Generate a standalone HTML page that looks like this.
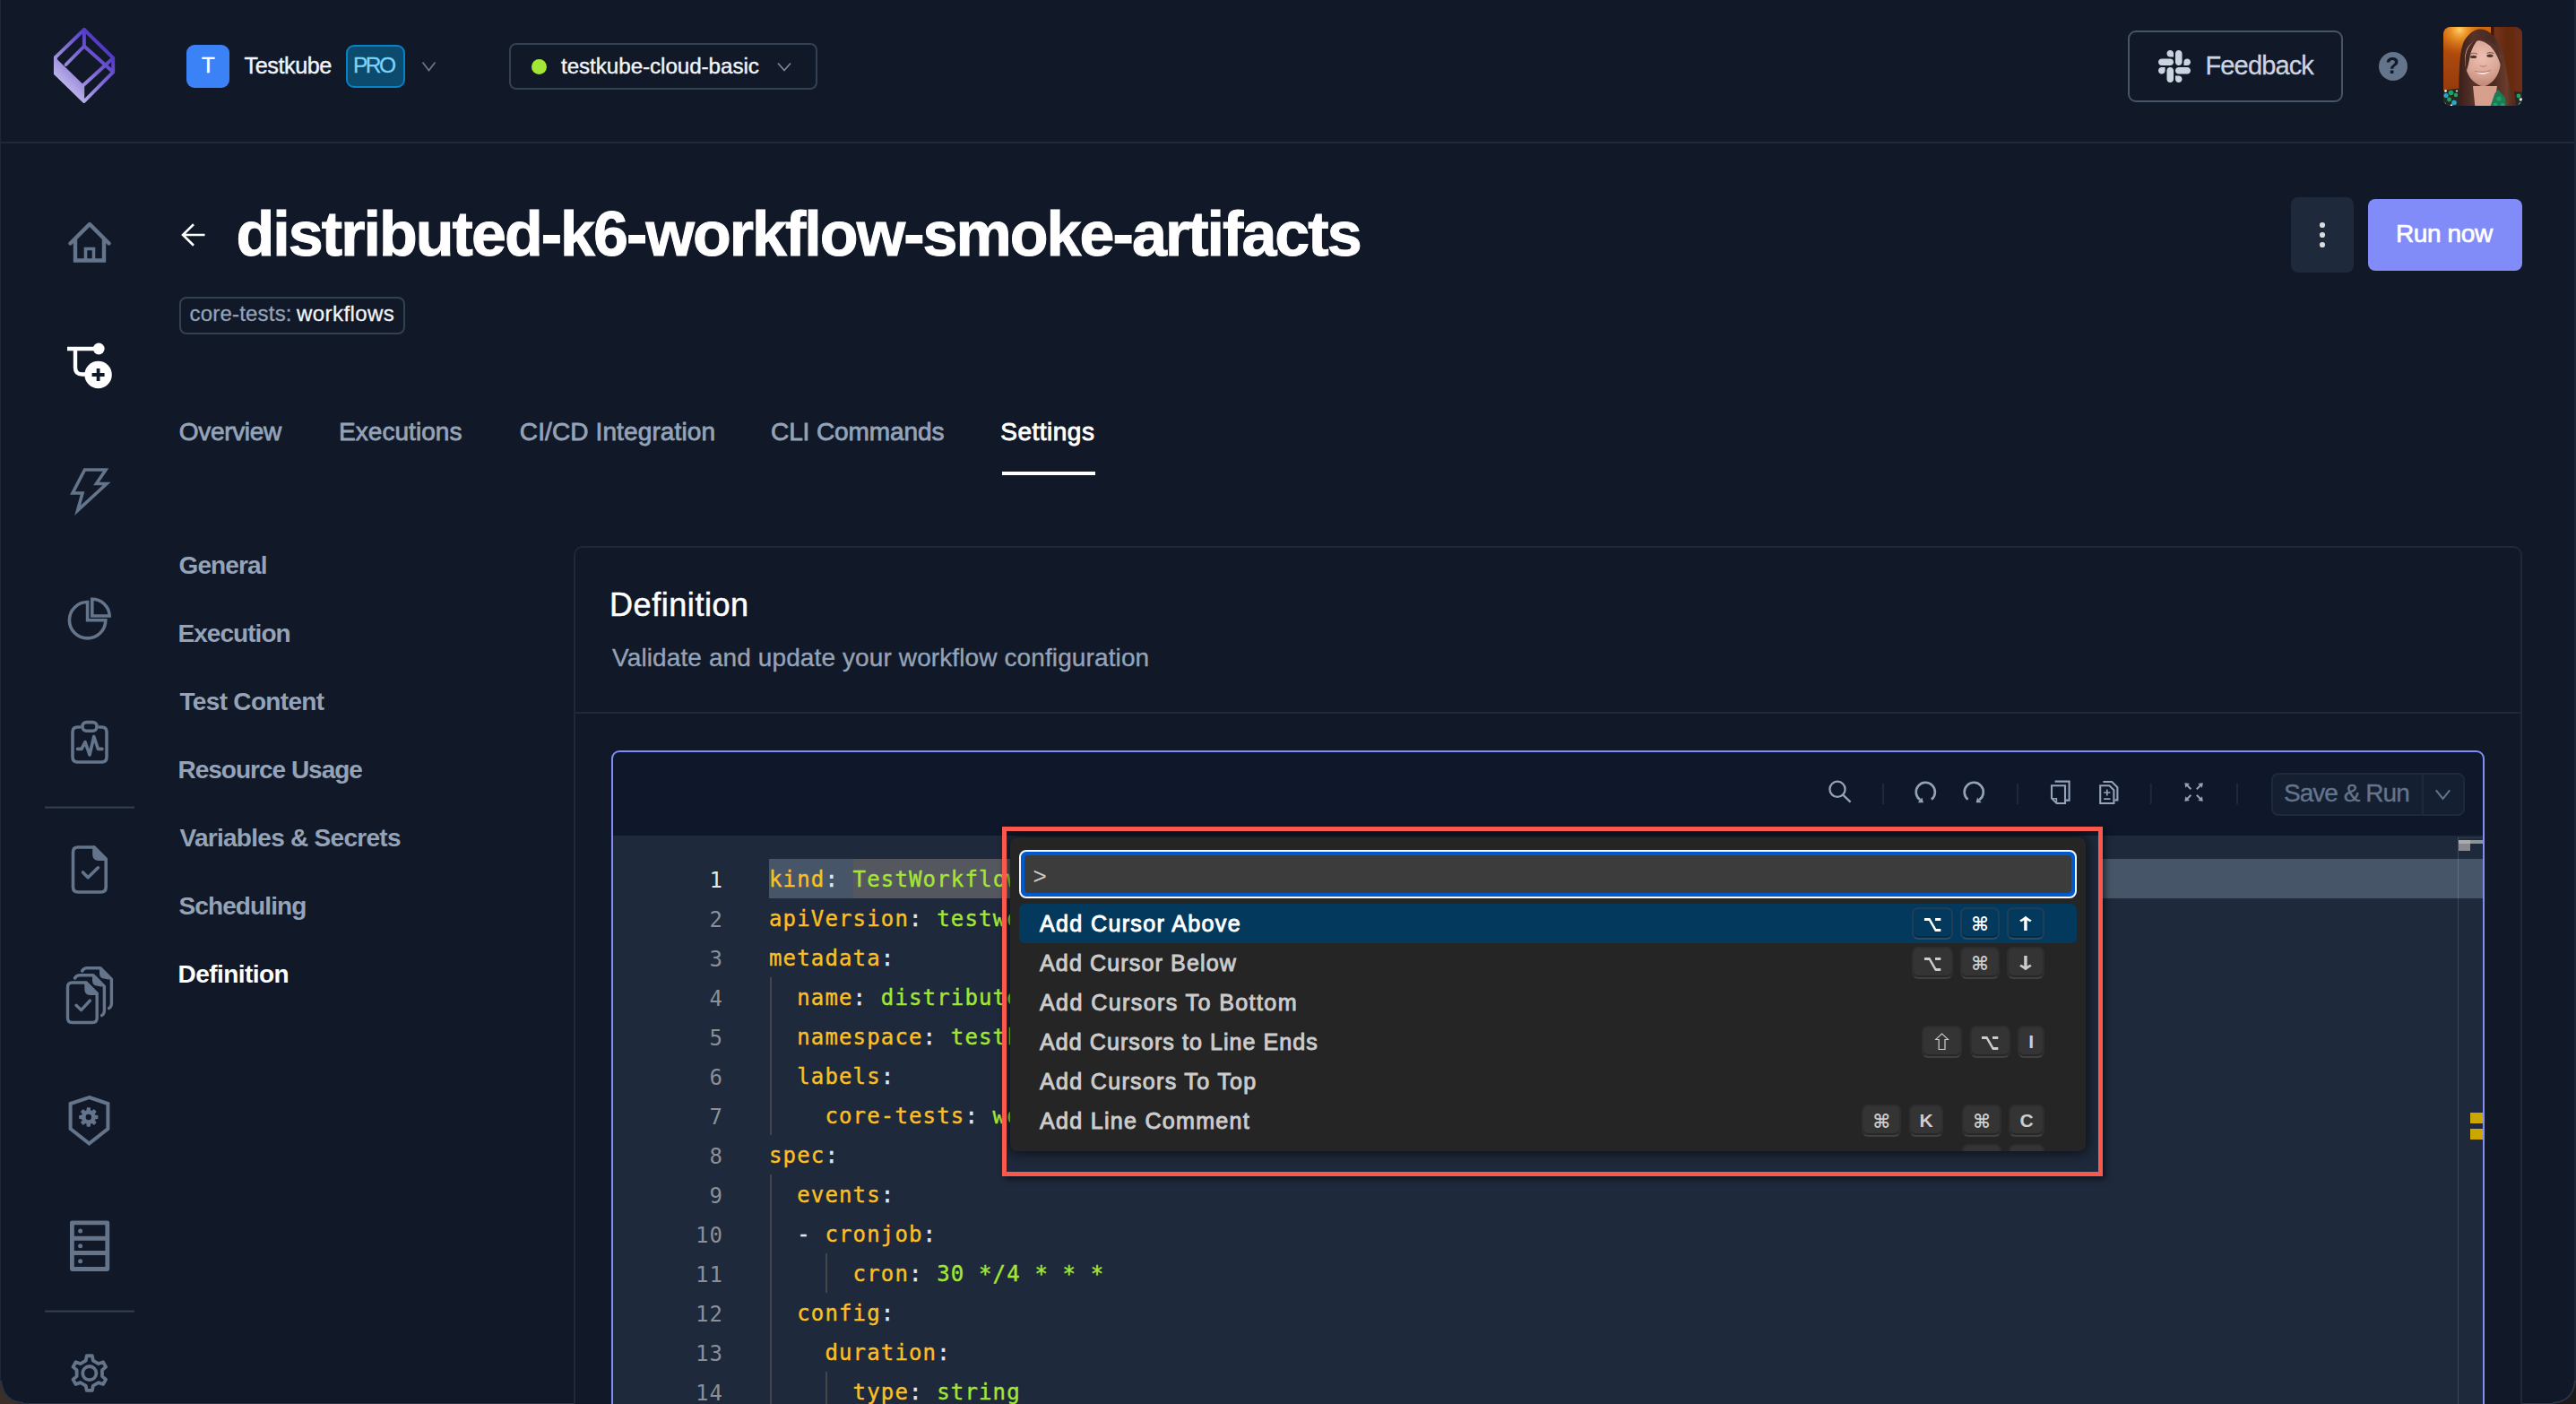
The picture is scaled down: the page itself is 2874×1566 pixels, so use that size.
<!DOCTYPE html>
<html lang="en">
<head>
<meta charset="utf-8">
<title>distributed-k6-workflow-smoke-artifacts - Testkube</title>
<style>
html,body{margin:0;padding:0;background:#111827;}
body{width:2874px;height:1566px;overflow:hidden;position:relative;font-family:'Liberation Sans',sans-serif;}
.t{position:absolute;white-space:pre;line-height:1;}
#app{position:absolute;left:0;top:0;width:2874px;height:1566px;overflow:hidden;background:#111827;}
</style>
</head>
<body>
<div id="app">
<!-- header -->
<div style="position:absolute;left:0px;top:158px;width:2874px;height:2px;background:#1e293b;"></div>
<svg style="position:absolute;left:56px;top:28px;" width="76" height="90" viewBox="56 28 76 90" fill="none">
<defs><linearGradient id="lg" x1="60" y1="100" x2="114" y2="48" gradientUnits="userSpaceOnUse">
<stop offset="0" stop-color="#d2cff0"/><stop offset="0.5" stop-color="#8b78d8"/><stop offset="1" stop-color="#4f34c8"/></linearGradient></defs>
<g stroke="url(#lg)" stroke-width="3.9" stroke-linejoin="round" stroke-linecap="round">
<path d="M93.9 33 L126.2 64.7 L126.2 80.3 L93.9 113 L61.9 81.9 L61.9 63.9 Z"/>
<path d="M93.9 33 V51.5 M93.9 51.5 L73.6 72 M93.9 51.5 L126.2 80.3 M93 95 L126.2 64.7"/>
<path d="M60 62.4 L94.2 95.4 L94.2 114.6 L60 82.6 Z" fill="url(#lg)" stroke="none"/>
</g></svg>
<div style="position:absolute;left:208px;top:50px;width:48px;height:48px;background:#3b82f6;border-radius:9px;"></div>
<span class="t" style="left:225.0px;top:61.2px;font-size:24px;color:#ffffff;letter-spacing:-0.50px;-webkit-text-stroke:0.5px #ffffff;">T</span>
<span class="t" style="left:272.5px;top:60.7px;font-size:25.2px;color:#f1f5f9;letter-spacing:-0.43px;-webkit-text-stroke:0.4px #f1f5f9;">Testkube</span>
<div style="position:absolute;left:386px;top:50px;width:66px;height:48px;box-sizing:border-box;background:#0c4a6e;border:2px solid #0284c7;border-radius:9px;"></div>
<span class="t" style="left:394.0px;top:61.3px;font-size:24.5px;color:#7dd3fc;letter-spacing:-2.50px;-webkit-text-stroke:0.3px #7dd3fc;">PRO</span>
<svg style="position:absolute;left:468px;top:66px;" width="22" height="16" viewBox="468 66 22 16" fill="none"><path d="M471.5 69.5 L478.5 78.5 L485.5 69.5" stroke="#6b7789" stroke-width="1.7" /></svg>
<div style="position:absolute;left:568px;top:48px;width:344px;height:52px;box-sizing:border-box;border:2px solid #334155;border-radius:8px;"></div>
<div style="position:absolute;left:593px;top:66px;width:17px;height:17px;background:#a3e635;border-radius:50%;"></div>
<span class="t" style="left:626.0px;top:61.8px;font-size:24.2px;color:#f1f5f9;letter-spacing:-0.05px;-webkit-text-stroke:0.4px #f1f5f9;">testkube-cloud-basic</span>
<svg style="position:absolute;left:864px;top:66px;" width="22" height="16" viewBox="864 66 22 16" fill="none"><path d="M868 70.5 L875 78.5 L882 70.5" stroke="#7b899d" stroke-width="1.7" /></svg>
<div style="position:absolute;left:2374px;top:34px;width:240px;height:80px;box-sizing:border-box;border:2px solid #475569;border-radius:9px;"></div>
<svg style="position:absolute;left:2404px;top:52px;" width="44" height="44" viewBox="2404 52 44 44" fill="none"><g fill="#cbd5e1" transform="translate(2408 56) scale(0.2932)">
<path d="M25.8 77.6c0 7.1-5.8 12.9-12.9 12.9S0 84.7 0 77.6s5.8-12.9 12.9-12.9h12.9v12.9zm6.5 0c0-7.1 5.8-12.9 12.9-12.9s12.9 5.8 12.9 12.9v32.3c0 7.1-5.8 12.9-12.9 12.9s-12.9-5.8-12.9-12.9V77.6z"/>
<path d="M45.2 25.8c-7.1 0-12.9-5.8-12.9-12.9S38.1 0 45.2 0s12.9 5.8 12.9 12.9v12.9H45.2zm0 6.5c7.1 0 12.9 5.8 12.9 12.9s-5.8 12.9-12.9 12.9H12.9C5.8 58.1 0 52.3 0 45.2s5.8-12.9 12.9-12.9h32.3z"/>
<path d="M97 45.2c0-7.1 5.8-12.9 12.9-12.9s12.9 5.8 12.9 12.9-5.8 12.9-12.9 12.9H97V45.2zm-6.5 0c0 7.1-5.8 12.9-12.9 12.9s-12.9-5.8-12.9-12.9V12.9C64.7 5.8 70.5 0 77.6 0s12.9 5.8 12.9 12.9v32.3z"/>
<path d="M77.6 97c7.1 0 12.9 5.8 12.9 12.9s-5.8 12.9-12.9 12.9-12.9-5.8-12.9-12.9V97h12.9zm0-6.5c-7.1 0-12.9-5.8-12.9-12.9s5.8-12.9 12.9-12.9h32.3c7.1 0 12.9 5.8 12.9 12.9s-5.8 12.9-12.9 12.9H77.6z"/>
</g></svg>
<span class="t" style="left:2460.5px;top:58.5px;font-size:29px;color:#cbd5e1;letter-spacing:-0.86px;-webkit-text-stroke:0.3px #cbd5e1;">Feedback</span>
<div style="position:absolute;left:2654px;top:58px;width:32px;height:32px;background:#64748b;border-radius:50%;"></div>
<span class="t" style="left:2661.5px;top:61.3px;font-size:25px;color:#111827;font-weight:bold;">?</span>
<svg style="position:absolute;left:2726px;top:30px;" width="88" height="88" viewBox="0 0 88 88" fill="none">
<defs>
<clipPath id="avc"><rect x="0" y="0" width="88" height="88" rx="8" ry="8"/></clipPath>
<filter id="avb" x="-5%" y="-5%" width="110%" height="110%"><feGaussianBlur stdDeviation="0.75"/></filter>
<filter id="avb2" x="-5%" y="-5%" width="110%" height="110%"><feGaussianBlur stdDeviation="0.4"/></filter>
<linearGradient id="avbg" x1="0" y1="0" x2="0" y2="88" gradientUnits="userSpaceOnUse"><stop offset="0" stop-color="#d2690f"/><stop offset="0.3" stop-color="#b04a0c"/><stop offset="1" stop-color="#8a3609"/></linearGradient>
<radialGradient id="avhl" cx="18" cy="3" r="30" gradientUnits="userSpaceOnUse"><stop offset="0" stop-color="#ffd070"/><stop offset="0.3" stop-color="#f09a2c" stop-opacity="0.9"/><stop offset="1" stop-color="#c8640f" stop-opacity="0"/></radialGradient>
<linearGradient id="avr" x1="56" y1="0" x2="88" y2="0" gradientUnits="userSpaceOnUse"><stop offset="0" stop-color="#74341a"/><stop offset="0.5" stop-color="#64290f"/><stop offset="1" stop-color="#6e3016"/></linearGradient>
<linearGradient id="avhair" x1="17" y1="0" x2="80" y2="0" gradientUnits="userSpaceOnUse"><stop offset="0" stop-color="#3b2019"/><stop offset="0.25" stop-color="#55322a"/><stop offset="0.6" stop-color="#4a2a22"/><stop offset="0.85" stop-color="#6a3c2c"/><stop offset="1" stop-color="#4a271c"/></linearGradient>
<radialGradient id="avface" cx="44" cy="34" r="30" gradientUnits="userSpaceOnUse"><stop offset="0" stop-color="#eec0b2"/><stop offset="0.6" stop-color="#dba797"/><stop offset="1" stop-color="#c48d7b"/></radialGradient>
</defs>
<g clip-path="url(#avc)">
<g filter="url(#avb)">
<rect x="-2" y="-2" width="92" height="92" fill="url(#avbg)"/>
<rect x="-2" y="-2" width="60" height="34" fill="url(#avhl)"/>
<rect x="56" y="-2" width="34" height="92" fill="url(#avr)"/>
<rect x="53" y="-2" width="3.5" height="30" fill="#3e180a"/>
<path d="M41 2.5 C34 2.5 28 8 23 16 C19.5 24 18.5 36 18 45 C17.2 56 16.8 70 18.5 90 L80.5 90 C79 82 75 70 72.6 60 C71 50 68.5 38 66 29 C63 19 58 10 50.6 5.5 C47.5 3.5 44.5 2.5 41 2.5 Z" fill="url(#avhair)"/>
<path d="M33 66 L60 66 L56.5 90 L35.5 90 Z" fill="#d7a08d"/>
<path d="M24 36 C24 24 30 15 42 15 C55 15 64 24 64 37 C64 50 58 60 50 64.5 C46 66.5 42.5 66.5 39 64.5 C30 60 24 50 24 36 Z" fill="url(#avface)"/>
<path d="M24.5 40 C24 26 30 17 38 14.5 C34 20 30.5 27 29.5 34 C28.5 40 27 46 25.5 50 Z" fill="#4a2a22"/>
<path d="M38 14.5 C46 12.5 56 16 61 24 C63.5 29 64.5 36 64.5 44 C62 36 58 27 52 21 C48 17.5 43 15.5 38 14.5 Z" fill="#53302a"/>
<ellipse cx="33.6" cy="33.4" rx="3.6" ry="1.7" fill="#4e352e"/>
<ellipse cx="52" cy="32.2" rx="3.6" ry="1.7" fill="#4e352e"/>
<path d="M30 30.6 C32.5 29 35.5 29 38 30.4 M48.5 29.6 C51 28.2 54 28.4 56.5 29.8" stroke="#8a6256" stroke-width="1.1" fill="none"/>
<path d="M40.5 43 C43 44.6 46 44.6 48.5 43" stroke="#bf8876" stroke-width="1.3" fill="none"/>
<path d="M35.5 49.6 C40 51.4 48 51.4 52.5 48.8 C48.5 54 40 54.2 35.5 49.6 Z" fill="#f6eeea"/>
<path d="M35 49.4 C40 51 48 50.8 53 48.4" stroke="#b06a5e" stroke-width="0.9" fill="none"/>
</g>
<g filter="url(#avb2)">
<path d="M-2 71 L17.5 68.5 L19 90 L-2 90 Z" fill="#2a2622"/>
<path d="M57.5 74 L61 70 L69 79 L70 90 L52 90 Z" fill="#1f7a56"/>
<path d="M79 72 L90 73 L90 90 L81 90 Z" fill="#2a2622"/>
<g fill="#2aa6c4"><circle cx="3" cy="76.5" r="2.6"/><circle cx="12" cy="84.5" r="2.8"/><circle cx="1" cy="86" r="2"/><circle cx="86" cy="86.5" r="2.2"/></g>
<g fill="#1fa467"><circle cx="8.5" cy="73.5" r="2.8"/><circle cx="6.5" cy="81" r="2.4"/><circle cx="14" cy="76" r="2.2"/><circle cx="62" cy="80" r="2.6"/><circle cx="58" cy="87" r="2.4"/><circle cx="66" cy="87" r="2.2"/><circle cx="84" cy="77" r="2.4"/></g>
<g fill="#ece6dc"><circle cx="2.5" cy="71.5" r="1.4"/><circle cx="86.5" cy="81" r="1.8"/><circle cx="15" cy="71.5" r="1.1"/><circle cx="9" cy="87.5" r="1.2"/></g>
</g>
</g></svg>
<div style="position:absolute;left:2872px;top:0px;width:2px;height:1566px;background:#1c2536;"></div>
<div style="position:absolute;left:0px;top:0px;width:1px;height:1566px;background:#1f2839;"></div>
<!-- sidebar -->
<svg style="position:absolute;left:40px;top:230px;" width="120" height="1336" viewBox="40 230 120 1336" fill="none"><g stroke="#64748b" stroke-width="4.4" stroke-linejoin="round" stroke-linecap="round"><path d="M78.5 271.5 L100 250 L121.5 271.5"/><path d="M84 267 V290.5 H116 V267" stroke-linejoin="miter" stroke-linecap="butt"/><path d="M95.5 290 V277.5 H104.5 V290" stroke-width="3.6" stroke-linejoin="miter" stroke-linecap="butt"/></g><g stroke="#ffffff" stroke-width="4.4" fill="none"><path d="M75 389 H108"/><path d="M84 389 V410 Q84 417.5 91.5 417.5 H100"/></g><circle cx="110.2" cy="389" r="6.4" fill="#fff"/><circle cx="109.6" cy="418" r="15.2" fill="#fff"/><path d="M102.6 418 H116.6 M109.6 411 V425" stroke="#111827" stroke-width="3.8"/><path d="M94.5 524 H118 L107.5 539.5 H119 L86.6 569.4 L92 550 H81 Z" stroke="#64748b" stroke-width="3.6" stroke-linejoin="miter"/><g stroke="#64748b" stroke-width="3.6" fill="none"><path d="M97.6 671.5 A20.2 20.2 0 1 0 117.8 691.7 H97.6 Z" stroke-linejoin="miter"/><path d="M102.8 668.2 A19.4 19.4 0 0 1 122.2 687 H102.8 Z" stroke-linejoin="miter"/></g><g stroke="#64748b" stroke-width="3.6" fill="none" stroke-linecap="round" stroke-linejoin="round"><path d="M89 811 H86.5 Q81 811 81 816.5 V844.5 Q81 850 86.5 850 H113.5 Q119 850 119 844.5 V816.5 Q119 811 113.5 811 H111"/><rect x="92" y="805.6" width="16" height="9.6" rx="4.4"/><path d="M86.5 835.4 H91 L95 827.6 L100 842 L104.8 821.5 L109.4 835.4 H114"/></g><rect x="50" y="899.6" width="100" height="2" fill="#334155"/><g stroke="#64748b" stroke-width="3.6" fill="none" stroke-linejoin="round" stroke-linecap="round"><path d="M87 945 H105 L118.2 958.2 V989.5 Q118.2 995 112.7 995 H87 Q81.5 995 81.5 989.5 V950.5 Q81.5 945 87 945 Z"/><path d="M105 945 V953 Q105 958.2 110.2 958.2 H118.2 Z" fill="#64748b"/><path d="M92.5 973 L98.2 978.8 L109.4 967.8"/></g><g stroke="#64748b" stroke-width="3.4" fill="none" stroke-linejoin="round" stroke-linecap="round"><path d="M80.5 1096 H96 L108.2 1108.2 V1135.5 Q108.2 1140.5 103.2 1140.5 H80.5 Q75.5 1140.5 75.5 1135.5 V1101 Q75.5 1096 80.5 1096 Z"/><path d="M96 1096 V1103.5 Q96 1108.2 100.7 1108.2 H108.2 Z" fill="#64748b"/><path d="M85 1121.2 L90.6 1126.6 L100.4 1116"/><path d="M83.5 1091 Q85.5 1087.8 89 1087.8 H104 L116.4 1100.2 V1127 Q116.4 1131 113.6 1132.6"/><path d="M104 1087.8 V1094 Q104 1097 106 1098 L113 1099.5 Z" fill="#64748b" stroke-width="2"/><path d="M91.6 1083 Q93.6 1079.8 97 1079.8 H112 L124.4 1092.2 V1119 Q124.4 1123 121.6 1124.6"/><path d="M112 1079.8 V1086 Q112 1089 114 1090 L121 1091.5 Z" fill="#64748b" stroke-width="2"/></g><path d="M99.5 1224 L120.4 1231 V1259 L99.5 1275.5 L78.6 1259 V1231 Z" stroke="#64748b" stroke-width="4" stroke-linejoin="miter" fill="none"/><path d="M97.12 1239.00 L97.47 1236.09 L100.13 1236.09 L100.48 1239.00 L102.56 1239.86 L104.87 1238.05 L106.75 1239.93 L104.94 1242.24 L105.80 1244.32 L108.71 1244.67 L108.71 1247.33 L105.80 1247.68 L104.94 1249.76 L106.75 1252.07 L104.87 1253.95 L102.56 1252.14 L100.48 1253.00 L100.13 1255.91 L97.47 1255.91 L97.12 1253.00 L95.04 1252.14 L92.73 1253.95 L90.85 1252.07 L92.66 1249.76 L91.80 1247.68 L88.89 1247.33 L88.89 1244.67 L91.80 1244.32 L92.66 1242.24 L90.85 1239.93 L92.73 1238.05 L95.04 1239.86 Z" fill="#64748b" stroke="#64748b" stroke-width="1.5" stroke-linejoin="round"/><circle cx="98.8" cy="1246" r="3.2" fill="#111827"/><g stroke="#64748b" fill="none"><rect x="80.4" y="1363.9" width="39.4" height="51.6" stroke-width="4.8" stroke-linejoin="round"/><path d="M80 1381.2 H120 M80 1397.6 H120" stroke-width="5"/></g><g fill="#64748b"><circle cx="89.6" cy="1373" r="2.5"/><circle cx="89.6" cy="1389.8" r="2.5"/><circle cx="89.6" cy="1406.8" r="2.5"/></g><rect x="50" y="1461.6" width="100" height="2" fill="#334155"/><path d="M95.73 1517.58 L96.73 1512.24 L102.87 1512.24 L103.87 1517.58 L109.91 1521.06 L115.03 1519.27 L118.10 1524.58 L113.98 1528.12 L113.98 1535.08 L118.10 1538.62 L115.03 1543.93 L109.91 1542.14 L103.87 1545.62 L102.87 1550.96 L96.73 1550.96 L95.73 1545.62 L89.69 1542.14 L84.57 1543.93 L81.50 1538.62 L85.62 1535.08 L85.62 1528.12 L81.50 1524.58 L84.57 1519.27 L89.69 1521.06 Z" stroke="#64748b" stroke-width="3.8" stroke-linejoin="round" fill="none"/><circle cx="99.8" cy="1531.6" r="7.6" stroke="#64748b" stroke-width="3.8" fill="none"/></svg>
<svg style="position:absolute;left:0px;top:1536px;" width="30" height="30" viewBox="0 1536 30 30" fill="none"><path d="M0 1566 H26 Q3 1564 0 1540 Z" fill="#3b2f27"/><path d="M1 1540 Q3 1563 26 1565" stroke="#2a3446" stroke-width="2" fill="none"/></svg>
<svg style="position:absolute;left:2844px;top:1536px;" width="30" height="30" viewBox="2844 1536 30 30" fill="none"><path d="M2874 1566 H2848 Q2871 1564 2874 1540 Z" fill="#1b1a18"/><path d="M2873 1540 Q2871 1563 2848 1565" stroke="#2a3446" stroke-width="2" fill="none"/></svg>
<div style="position:absolute;left:26px;top:1564.5px;width:2822px;height:1.5px;background:#2b3547;"></div>
<!-- page header -->
<svg style="position:absolute;left:198px;top:244px;" width="36" height="36" viewBox="198 244 36 36" fill="none"><path d="M228.5 262 H204.5 M216 250.2 L204 262 L216 273.8" stroke="#ffffff" stroke-width="2.6" stroke-linejoin="miter" fill="none"/></svg>
<span class="t" style="left:263.5px;top:225.7px;font-size:70px;color:#ffffff;font-weight:bold;letter-spacing:-1.95px;-webkit-text-stroke:1px #ffffff;">distributed-k6-workflow-smoke-artifacts</span>
<div style="position:absolute;left:200px;top:331px;width:252px;height:42px;box-sizing:border-box;border:2px solid #334155;border-radius:8px;"></div>
<span class="t" style="left:211.5px;top:337.7px;font-size:24px;color:#94a3b8;letter-spacing:0.20px;-webkit-text-stroke:0.3px #94a3b8;">core-tests:</span>
<span class="t" style="left:331.0px;top:337.7px;font-size:24px;color:#f1f5f9;letter-spacing:0.44px;-webkit-text-stroke:0.3px #f1f5f9;">workflows</span>
<div style="position:absolute;left:2556px;top:220px;width:70px;height:84px;background:#1e293b;border-radius:8px;"></div>
<svg style="position:absolute;left:2584px;top:244px;" width="14" height="36" viewBox="2584 244 14 36" fill="none"><g fill="#dbdbdb"><circle cx="2591" cy="251" r="3.1"/><circle cx="2591" cy="262" r="3.1"/><circle cx="2591" cy="273" r="3.1"/></g></svg>
<div style="position:absolute;left:2642px;top:222px;width:172px;height:80px;background:#818cf8;border-radius:8px;"></div>
<span class="t" style="left:2673.0px;top:246.7px;font-size:28px;color:#ffffff;letter-spacing:-0.40px;-webkit-text-stroke:0.7px #ffffff;">Run now</span>
<span class="t" style="left:199.8px;top:468.3px;font-size:28px;color:#94a3b8;letter-spacing:-0.32px;-webkit-text-stroke:0.8px #94a3b8;">Overview</span>
<span class="t" style="left:378.0px;top:468.3px;font-size:28px;color:#94a3b8;letter-spacing:0.06px;-webkit-text-stroke:0.8px #94a3b8;">Executions</span>
<span class="t" style="left:579.8px;top:468.3px;font-size:28px;color:#94a3b8;letter-spacing:0.12px;-webkit-text-stroke:0.8px #94a3b8;">CI/CD Integration</span>
<span class="t" style="left:860.0px;top:468.3px;font-size:28px;color:#94a3b8;letter-spacing:-0.09px;-webkit-text-stroke:0.8px #94a3b8;">CLI Commands</span>
<span class="t" style="left:1116.3px;top:468.3px;font-size:28px;color:#ffffff;letter-spacing:0.49px;-webkit-text-stroke:0.9px #ffffff;">Settings</span>
<div style="position:absolute;left:1117.5px;top:525.5px;width:104.5px;height:4px;background:#ffffff;"></div>
<span class="t" style="left:199.5px;top:617.1px;font-size:28px;color:#94a3b8;font-weight:bold;letter-spacing:-0.87px;">General</span>
<span class="t" style="left:198.5px;top:693.1px;font-size:28px;color:#94a3b8;font-weight:bold;letter-spacing:-0.95px;">Execution</span>
<span class="t" style="left:200.5px;top:769.1px;font-size:28px;color:#94a3b8;font-weight:bold;letter-spacing:-0.68px;">Test Content</span>
<span class="t" style="left:198.5px;top:845.1px;font-size:28px;color:#94a3b8;font-weight:bold;letter-spacing:-1.00px;">Resource Usage</span>
<span class="t" style="left:200.5px;top:921.1px;font-size:28px;color:#94a3b8;font-weight:bold;letter-spacing:-0.72px;">Variables &amp; Secrets</span>
<span class="t" style="left:199.5px;top:997.1px;font-size:28px;color:#94a3b8;font-weight:bold;letter-spacing:-0.89px;">Scheduling</span>
<span class="t" style="left:198.5px;top:1073.1px;font-size:28px;color:#ffffff;font-weight:bold;letter-spacing:-0.56px;">Definition</span>
<!-- definition card -->
<div style="position:absolute;left:640px;top:609px;width:2174px;height:1000px;box-sizing:border-box;border:2px solid #1e293b;border-radius:10px;background:#111827;"></div>
<span class="t" style="left:680.0px;top:656.5px;font-size:36px;color:#ffffff;letter-spacing:0.56px;-webkit-text-stroke:0.5px #ffffff;">Definition</span>
<span class="t" style="left:683.0px;top:720.3px;font-size:28px;color:#94a3b8;letter-spacing:0.11px;-webkit-text-stroke:0.35px #94a3b8;">Validate and update your workflow configuration</span>
<div style="position:absolute;left:642px;top:794px;width:2170px;height:2px;background:#1e293b;"></div>
<!-- editor -->
<div style="position:absolute;left:682px;top:837px;width:2090px;height:760px;box-sizing:border-box;border:2px solid #818cf8;border-radius:9px;background:#0f172a;overflow:hidden;"><div style="position:absolute;left:0;top:93px;width:2086px;height:700px;background:#1e293b;"></div></div>
<svg style="position:absolute;left:2030px;top:862px;" width="480" height="44" viewBox="2030 862 480 44" fill="none"><g stroke="#94a3b8" stroke-width="2.3" fill="none"><circle cx="2050" cy="880.3" r="8.6"/><path d="M2056.2 886.6 L2064.6 894.6"/></g><rect x="2100" y="874" width="2" height="23" fill="#1e293b"/><rect x="2250" y="874" width="2" height="23" fill="#1e293b"/><rect x="2398.8" y="874" width="2" height="23" fill="#1e293b"/><rect x="2495" y="874" width="2" height="23" fill="#1e293b"/><path d="M2154.9 891.7 A10.6 10.6 0 1 0 2142.2 892.1" stroke="#94a3b8" stroke-width="2.6" fill="none"/><path d="M2139.8 895.3 L2145.9 895.3 L2144.4 889.6 Z" fill="#94a3b8"/><path d="M2195.6 891.7 A10.6 10.6 0 1 1 2208.3 892.1" stroke="#94a3b8" stroke-width="2.6" fill="none"/><path d="M2210.7 895.3 L2204.6 895.3 L2206.1 889.6 Z" fill="#94a3b8"/><g stroke="#94a3b8" stroke-width="2.1" fill="none" stroke-linejoin="miter"><path d="M2289 876.2 H2304 V896 H2294.6 L2289 890.4 Z"/><path d="M2289.4 890.8 H2294.4 V895.8" stroke-width="1.6"/><path d="M2292.6 871.6 H2308.6 V892.6 H2305"/></g><g stroke="#94a3b8" stroke-width="2.1" fill="none" stroke-linejoin="miter"><path d="M2343.2 876.2 H2353.4 L2358.4 881.2 V896 H2343.2 Z"/><path d="M2346.4 872 H2356.2 L2362.4 878.2 V892.4 H2359.4"/><path d="M2350.8 880.4 V887.6 M2347.2 884 H2354.4 M2347.2 891.2 H2354.4" stroke-width="1.7"/></g><path d="M2444.4 880.2 L2438.5 874.3" stroke="#94a3b8" stroke-width="2"/><path d="M2437.4 873.2 L2442.9 874.1 L2438.3 878.7 Z" fill="#94a3b8"/><path d="M2450.8 880.2 L2456.7 874.3" stroke="#94a3b8" stroke-width="2"/><path d="M2457.8 873.2 L2456.9 878.7 L2452.3 874.1 Z" fill="#94a3b8"/><path d="M2444.4 886.8 L2438.5 892.7" stroke="#94a3b8" stroke-width="2"/><path d="M2437.4 893.8 L2438.3 888.3 L2442.9 892.9 Z" fill="#94a3b8"/><path d="M2450.8 886.8 L2456.7 892.7" stroke="#94a3b8" stroke-width="2"/><path d="M2457.8 893.8 L2452.3 892.9 L2456.9 888.3 Z" fill="#94a3b8"/></svg>
<div style="position:absolute;left:2534px;top:862px;width:216px;height:48px;box-sizing:border-box;border:2px solid #1e293b;border-radius:8px;background:#151f32;"></div>
<div style="position:absolute;left:2702px;top:864px;width:2px;height:44px;background:#1e293b;"></div>
<span class="t" style="left:2548.0px;top:871.3px;font-size:28px;color:#64748b;letter-spacing:-0.96px;-webkit-text-stroke:0.35px #64748b;">Save &amp; Run</span>
<svg style="position:absolute;left:2712px;top:874px;" width="28" height="24" viewBox="2712 874 28 24" fill="none"><path d="M2717.8 881.4 L2725.5 890.8 L2733.2 881.4" stroke="#64748b" stroke-width="2" fill="none"/></svg>
<div style="position:absolute;left:858px;top:958px;width:93.6px;height:44px;background:#475569;"></div>
<div style="position:absolute;left:951.6px;top:958px;width:300px;height:44px;background:#54575d;"></div>
<div style="position:absolute;left:2346px;top:958px;width:424px;height:44px;background:#475569;"></div>
<style>.ln,.cl{position:absolute;white-space:pre;font-family:'DejaVu Sans Mono', 'Liberation Mono', monospace;font-size:24px;line-height:44px;height:44px;letter-spacing:1.152px;padding-top:1px;box-sizing:border-box;-webkit-text-stroke-width:0.4px}.ln{left:707.2px;width:100px;text-align:right;padding-top:2px;-webkit-text-stroke-width:0}</style>
<span class="ln" style="top:958px;color:#e5e7eb">1</span><span class="cl" style="top:958px;left:858.0px"><span style="color:#fbbf24">kind</span><span style="color:#e2e8f0">:</span><span style="color:#a3e635"> TestWorkflow</span></span><span class="ln" style="top:1002px;color:#8b8f97">2</span><span class="cl" style="top:1002px;left:858.0px"><span style="color:#fbbf24">apiVersion</span><span style="color:#e2e8f0">:</span><span style="color:#a3e635"> testworkflows.testkube.io/v1</span></span><span class="ln" style="top:1046px;color:#8b8f97">3</span><span class="cl" style="top:1046px;left:858.0px"><span style="color:#fbbf24">metadata</span><span style="color:#e2e8f0">:</span></span><span class="ln" style="top:1090px;color:#8b8f97">4</span><span class="cl" style="top:1090px;left:889.2px"><span style="color:#fbbf24">name</span><span style="color:#e2e8f0">:</span><span style="color:#a3e635"> distributed-k6-workflow-smoke-artifacts</span></span><span class="ln" style="top:1134px;color:#8b8f97">5</span><span class="cl" style="top:1134px;left:889.2px"><span style="color:#fbbf24">namespace</span><span style="color:#e2e8f0">:</span><span style="color:#a3e635"> testkube</span></span><span class="ln" style="top:1178px;color:#8b8f97">6</span><span class="cl" style="top:1178px;left:889.2px"><span style="color:#fbbf24">labels</span><span style="color:#e2e8f0">:</span></span><span class="ln" style="top:1222px;color:#8b8f97">7</span><span class="cl" style="top:1222px;left:920.4px"><span style="color:#fbbf24">core-tests</span><span style="color:#e2e8f0">:</span><span style="color:#a3e635"> workflows</span></span><span class="ln" style="top:1266px;color:#8b8f97">8</span><span class="cl" style="top:1266px;left:858.0px"><span style="color:#fbbf24">spec</span><span style="color:#e2e8f0">:</span></span><span class="ln" style="top:1310px;color:#8b8f97">9</span><span class="cl" style="top:1310px;left:889.2px"><span style="color:#fbbf24">events</span><span style="color:#e2e8f0">:</span></span><span class="ln" style="top:1354px;color:#8b8f97">10</span><span class="cl" style="top:1354px;left:889.2px"><span style="color:#e2e8f0">- </span><span style="color:#fbbf24">cronjob</span><span style="color:#e2e8f0">:</span></span><span class="ln" style="top:1398px;color:#8b8f97">11</span><span class="cl" style="top:1398px;left:951.6px"><span style="color:#fbbf24">cron</span><span style="color:#e2e8f0">:</span><span style="color:#a3e635"> 30 */4 * * *</span></span><span class="ln" style="top:1442px;color:#8b8f97">12</span><span class="cl" style="top:1442px;left:889.2px"><span style="color:#fbbf24">config</span><span style="color:#e2e8f0">:</span></span><span class="ln" style="top:1486px;color:#8b8f97">13</span><span class="cl" style="top:1486px;left:920.4px"><span style="color:#fbbf24">duration</span><span style="color:#e2e8f0">:</span></span><span class="ln" style="top:1530px;color:#8b8f97">14</span><span class="cl" style="top:1530px;left:951.6px"><span style="color:#fbbf24">type</span><span style="color:#e2e8f0">:</span><span style="color:#a3e635"> string</span></span>
<div style="position:absolute;left:859px;top:1090px;width:2px;height:176px;background:#44464a;"></div>
<div style="position:absolute;left:859px;top:1310px;width:2px;height:308px;background:#44464a;"></div>
<div style="position:absolute;left:921px;top:1398px;width:2px;height:44px;background:#44464a;"></div>
<div style="position:absolute;left:921px;top:1530px;width:2px;height:88px;background:#44464a;"></div>
<div style="position:absolute;left:2742px;top:934px;width:1px;height:640px;background:rgba(255,255,255,0.15);"></div>
<div style="position:absolute;left:2742px;top:934px;width:28px;height:1px;background:rgba(255,255,255,0.07);"></div>
<div style="position:absolute;left:2743px;top:937px;width:27px;height:4px;background:#8c9396;"></div>
<div style="position:absolute;left:2743px;top:937px;width:13px;height:4px;background:#ababab;"></div>
<div style="position:absolute;left:2743px;top:941px;width:13px;height:8px;background:#898a90;"></div>
<div style="position:absolute;left:2756px;top:1241px;width:14px;height:12px;background:#cca700;"></div>
<div style="position:absolute;left:2756px;top:1259px;width:14px;height:12px;background:#cca700;"></div>
<!-- command palette -->
<div style="position:absolute;left:1118px;top:922px;width:1228px;height:390px;box-sizing:border-box;border:5.6px solid #f8594c;box-shadow:3px 3px 7px rgba(0,0,0,.55);"></div>
<div style="position:absolute;left:1123.6px;top:927.6px;width:1216.8px;height:378.8px;overflow:hidden;"><div style="position:absolute;left:3.4px;top:6.4px;width:1200px;height:350px;background:#252526;border-radius:8px;box-shadow:0 0 14px 3px rgba(0,0,0,.55);"></div><div style="position:absolute;left:13.4px;top:20px;width:1180px;height:54.6px;box-sizing:border-box;border:2.4px solid #f4f7fd;border-radius:8px;background:#0059d1;"></div><div style="position:absolute;left:19.8px;top:26px;width:1167.2px;height:42.4px;background:#3c3c3c;border-radius:4px;"></div><div style="position:absolute;left:13.4px;top:80.4px;width:1180px;height:44px;background:#04395e;border-radius:6px;"></div></div>
<span class="t" style="left:1152.5px;top:964.0px;font-size:26px;color:#cccccc;">&gt;</span>
<span class="t pl" style="left:1160.0px;top:1018.3px;font-size:25.1px;color:#ffffff;letter-spacing:1.33px;-webkit-text-stroke:0.9px #ffffff;">Add Cursor Above</span>
<span class="t pl" style="left:1160.0px;top:1062.3px;font-size:25.1px;color:#cccccc;letter-spacing:1.11px;-webkit-text-stroke:0.9px #cccccc;">Add Cursor Below</span>
<span class="t pl" style="left:1160.0px;top:1106.3px;font-size:25.1px;color:#cccccc;letter-spacing:1.38px;-webkit-text-stroke:0.9px #cccccc;">Add Cursors To Bottom</span>
<span class="t pl" style="left:1160.0px;top:1150.3px;font-size:25.1px;color:#cccccc;letter-spacing:1.04px;-webkit-text-stroke:0.9px #cccccc;">Add Cursors to Line Ends</span>
<span class="t pl" style="left:1160.0px;top:1194.3px;font-size:25.1px;color:#cccccc;letter-spacing:1.28px;-webkit-text-stroke:0.9px #cccccc;">Add Cursors To Top</span>
<span class="t pl" style="left:1160.0px;top:1238.3px;font-size:25.1px;color:#cccccc;letter-spacing:1.26px;-webkit-text-stroke:0.9px #cccccc;">Add Line Comment</span>
<style>.kk{position:absolute;box-sizing:border-box;height:35.4px;border:2px solid #2e2e2f;border-bottom-color:#3f3f41;border-radius:7px;background:#343435;box-shadow:inset 0 -2px 0 rgba(0,0,0,.22);color:#cccccc;font-family:'DejaVu Sans', 'Liberation Sans', sans-serif;font-size:21px;line-height:34.5px;text-align:center;font-weight:bold}.kk.ks{background:#04395e;border-color:#1f3f59;border-bottom-color:#2b4a64;color:#fff}</style>
<div style="position:absolute;left:1127px;top:934px;width:1200px;height:350px;overflow:hidden;border-radius:8px;"><div style="position:absolute;left:-1127px;top:-934px"><span class="kk ks" style="left:2239.4px;top:1012.3px;width:41.6px;font-family:'Noto Sans CJK SC','DejaVu Sans',sans-serif;font-size:18px;line-height:31px;font-weight:900;"><span style="display:inline-block;transform:scale(1.55,0.98);">↑</span></span><span class="kk ks" style="left:2186.9px;top:1012.3px;width:44.3px;">⌘</span><span class="kk ks" style="left:2133.1px;top:1012.3px;width:45.6px;"><span style="display:inline-block;transform:scale(0.87,1.22);">⌥</span></span><span class="kk" style="left:2239.4px;top:1056.3px;width:41.6px;font-family:'Noto Sans CJK SC','DejaVu Sans',sans-serif;font-size:18px;line-height:31px;font-weight:900;"><span style="display:inline-block;transform:scale(1.55,0.98);">↓</span></span><span class="kk" style="left:2186.9px;top:1056.3px;width:44.3px;">⌘</span><span class="kk" style="left:2133.1px;top:1056.3px;width:45.6px;"><span style="display:inline-block;transform:scale(0.87,1.22);">⌥</span></span><span class="kk" style="left:2251.4px;top:1144.3px;width:29.6px;font-family:'Liberation Sans', sans-serif;line-height:32.5px;">I</span><span class="kk" style="left:2197.6px;top:1144.3px;width:45.6px;"><span style="display:inline-block;transform:scale(0.87,1.22);">⌥</span></span><span class="kk" style="left:2143.8px;top:1144.3px;width:45.6px;font-family:'Noto Sans CJK SC','DejaVu Sans',sans-serif;font-size:21px;line-height:30px;font-weight:900;"><span style="display:inline-block;transform:scale(1.15,0.95);">⇧</span></span><span class="kk" style="left:2241.4px;top:1232.3px;width:39.6px;font-family:'Liberation Sans', sans-serif;line-height:32.5px;">C</span><span class="kk" style="left:2188.9px;top:1232.3px;width:44.3px;">⌘</span><span class="kk" style="left:2129.7px;top:1232.3px;width:38.6px;font-family:'Liberation Sans', sans-serif;line-height:32.5px;">K</span><span class="kk" style="left:2077.2px;top:1232.3px;width:44.3px;">⌘</span><span class="kk" style="left:2241.4px;top:1276.3px;width:39.6px;font-family:'Liberation Sans', sans-serif;line-height:32.5px;">D</span><span class="kk" style="left:2188.9px;top:1276.3px;width:44.3px;">⌘</span></div></div>
</div>
</body>
</html>
